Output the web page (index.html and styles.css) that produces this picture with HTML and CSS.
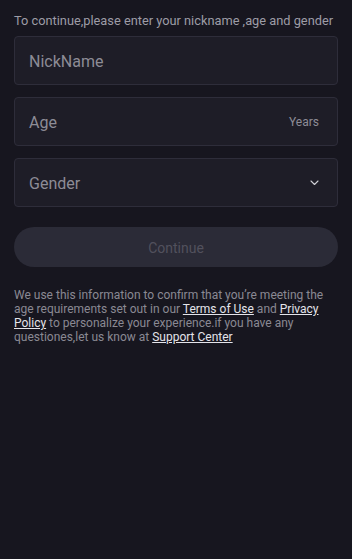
FILE: index.html
```html
<!DOCTYPE html>
<html lang="en">
<head>
<meta charset="utf-8">
<title>Profile</title>
<link rel="stylesheet" href="styles.css">
</head>
<body>
<main class="page">
  <p class="intro">To continue,please enter your nickname ,age and gender</p>
  <div class="fields">
    <div class="field"><span class="placeholder">NickName</span></div>
    <div class="field"><span class="placeholder">Age</span><span class="suffix">Years</span></div>
    <div class="field"><span class="placeholder">Gender</span>
      <svg class="chevron" width="9" height="6" viewBox="0 0 9 6" aria-hidden="true"><path d="M1 1l3.5 3.5L8 1" fill="none" stroke="#d0d0d6" stroke-width="1.1" stroke-linecap="round" stroke-linejoin="round"/></svg>
    </div>
  </div>
  <button class="continue" type="button">Continue</button>
  <p class="notice">We use this information to confirm that you’re meeting the age requirements set out in our <a href="#">Terms of Use</a> and <a href="#">Privacy Policy</a> to personalize your experience.if you have any questiones,let us know at <a href="#">Support Center</a></p>
</main>
</body>
</html>
```
FILE: styles.css
```css
html, body {
  margin: 0;
  padding: 0;
  background: #17161f;
  height: 100%;
}
body {
  font-family: Roboto, "Liberation Sans", sans-serif;
}
.page {
  padding: 12px 14px 0;
}
.intro {
  margin: 0;
  font-size: 12.8px;
  line-height: 17px;
  color: #9d9ca6;
  white-space: nowrap;
}
.fields {
  margin-top: 7px;
  display: flex;
  flex-direction: column;
  gap: 12px;
}
.field {
  box-sizing: border-box;
  height: 49px;
  border: 1px solid #2e2d3a;
  border-radius: 4px;
  background: #1e1d27;
  display: flex;
  align-items: center;
  justify-content: space-between;
  padding: 1px 18px 0 14px;
}
.placeholder {
  font-size: 16px;
  color: #8d8c96;
}
.suffix {
  font-size: 12px;
  color: #8d8c96;
}
.chevron {
  display: block;
}
.continue {
  display: block;
  width: 100%;
  height: 40px;
  margin-top: 20px;
  border: none;
  border-radius: 20px;
  background: #2b2b37;
  color: #52515d;
  font-family: inherit;
  font-size: 14px;
  padding: 1px 0 0;
}
.notice {
  margin: 21px 0 0;
  font-size: 12px;
  line-height: 14px;
  color: #8a8993;
}
.notice a {
  color: #e4e4ea;
  text-decoration: underline;
}
```
